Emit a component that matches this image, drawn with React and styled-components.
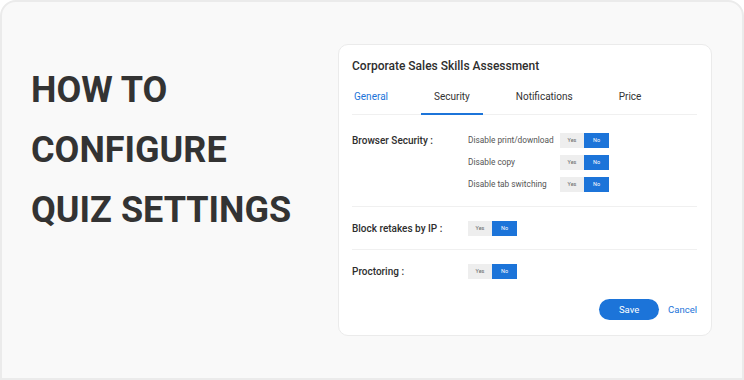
import React from "react";
import styled, { createGlobalStyle } from "styled-components";

const Global = createGlobalStyle`
  html, body { margin: 0; padding: 0; background: #ffffff; }
  body { font-family: Roboto, "Liberation Sans", sans-serif; }
`;

const Frame = styled.div`
  box-sizing: border-box;
  width: 744px;
  height: 380px;
  background: #f9f9f9;
  border: 2px solid #ebebeb;
  border-radius: 16px 16px 0 0;
  display: flex;
  align-items: flex-start;
`;

const Heading = styled.h1`
  margin: 0;
  padding: 58px 0 0 29px;
  width: 307px;
  font-size: 36px;
  line-height: 60px;
  font-weight: 700;
  color: #333333;
`;

const Card = styled.div`
  box-sizing: border-box;
  margin-top: 42px;
  width: 374px;
  height: 292px;
  background: #ffffff;
  border: 1.5px solid #ebebeb;
  border-radius: 10px;
  padding: 13px 14px 0 13px;
  display: flex;
  flex-direction: column;
`;

const CardTitle = styled.div`
  font-size: 12px;
  line-height: 16px;
  font-weight: 500;
  color: #2e2e2e;
`;

const Tabs = styled.div`
  display: flex;
  gap: 20px;
  margin-top: 16px;
  border-bottom: 1.5px solid #f0f0f0;
`;

const Tab = styled.div`
  padding: 0 13px 9px;
  margin-bottom: -1.5px;
  font-size: 10px;
  line-height: 14px;
  color: ${(p) => (p.$blue ? "#1c74d9" : "#333333")};
  border-bottom: 2px solid ${(p) => (p.$active ? "#1c74d9" : "transparent")};
  &:first-child { padding-left: 2px; }
`;

const Section = styled.div`
  display: flex;
  padding: ${(p) => (p.$first ? "18px 0 14px" : "14px 0 13px")};
  border-bottom: ${(p) => (p.$last ? "none" : "1.5px solid #f0f0f0")};
`;

const Label = styled.div`
  width: 116px;
  font-size: 10px;
  line-height: 15px;
  font-weight: 500;
  color: #2e2e2e;
`;

const Options = styled.div`
  display: flex;
  flex-direction: column;
  gap: 7px;
`;

const Option = styled.div`
  display: flex;
  align-items: center;
`;

const OptionText = styled.div`
  width: 92px;
  white-space: nowrap;
  font-size: 8.3px;
  line-height: 15px;
  color: #555555;
`;

const Toggle = styled.div`
  display: flex;
  height: 15px;
`;

const Seg = styled.div`
  width: ${(p) => (p.$on ? "25px" : "24px")};
  display: flex;
  align-items: center;
  justify-content: center;
  font-size: 5.5px;
  background: ${(p) => (p.$on ? "#1c74d9" : "#eeeeee")};
  color: ${(p) => (p.$on ? "#ffffff" : "#666666")};
`;

const Footer = styled.div`
  display: flex;
  justify-content: flex-end;
  align-items: center;
  gap: 9px;
  margin-top: 7px;
`;

const SaveButton = styled.button`
  width: 60px;
  height: 21px;
  border: none;
  border-radius: 11px;
  background: #1c74d9;
  color: #ffffff;
  font-family: inherit;
  font-size: 9.5px;
  padding: 0;
`;

const CancelLink = styled.span`
  font-size: 9.5px;
  color: #1c74d9;
`;

const YesNo = () => (
  <Toggle>
    <Seg>Yes</Seg>
    <Seg $on>No</Seg>
  </Toggle>
);

export default function App() {
  return (
    <>
      <Global />
      <Frame>
        <Heading>
          HOW TO
          <br />
          CONFIGURE
          <br />
          QUIZ SETTINGS
        </Heading>
        <Card>
          <CardTitle>Corporate Sales Skills Assessment</CardTitle>
          <Tabs>
            <Tab $blue>General</Tab>
            <Tab $active>Security</Tab>
            <Tab>Notifications</Tab>
            <Tab>Price</Tab>
          </Tabs>
          <Section $first>
            <Label>Browser Security :</Label>
            <Options>
              {["Disable print/download", "Disable copy", "Disable tab switching"].map((t) => (
                <Option key={t}>
                  <OptionText>{t}</OptionText>
                  <YesNo />
                </Option>
              ))}
            </Options>
          </Section>
          <Section>
            <Label>Block retakes by IP :</Label>
            <YesNo />
          </Section>
          <Section $last>
            <Label>Proctoring :</Label>
            <YesNo />
          </Section>
          <Footer>
            <SaveButton>Save</SaveButton>
            <CancelLink>Cancel</CancelLink>
          </Footer>
        </Card>
      </Frame>
    </>
  );
}
